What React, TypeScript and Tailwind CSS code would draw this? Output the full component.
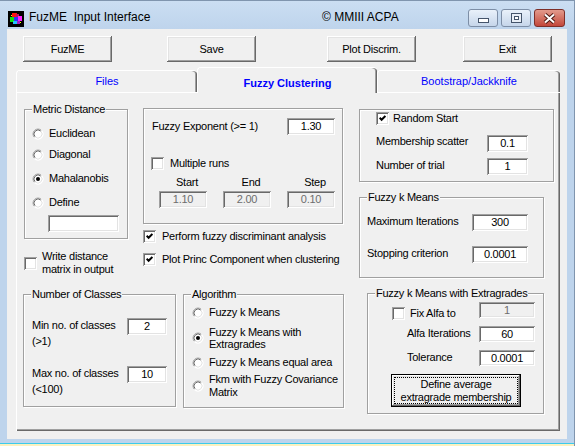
import React from "react"

const raised =
  "bg-[#f0f0f0] shadow-[inset_-1px_-1px_#696969,inset_1px_1px_#ffffff,inset_-2px_-2px_#a0a0a0,inset_2px_2px_#e3e3e3]"
const sunken =
  "shadow-[inset_1px_1px_#a0a0a0,inset_-1px_-1px_#ffffff,inset_2px_2px_#696969,inset_-2px_-2px_#e3e3e3]"

function Radio({ checked = false }: { checked?: boolean }) {
  return (
    <svg width="12" height="12" viewBox="0 0 12 12" className="shrink-0">
      <circle cx="6" cy="6" r="5.5" fill="#fff" />
      <path d="M2.46 9.54A5 5 0 0 1 9.54 2.46" fill="none" stroke="#a0a0a0" />
      <path d="M9.54 2.46A5 5 0 0 1 2.46 9.54" fill="none" stroke="#ffffff" />
      <path d="M3.17 8.83A4 4 0 0 1 8.83 3.17" fill="none" stroke="#696969" />
      <path d="M8.83 3.17A4 4 0 0 1 3.17 8.83" fill="none" stroke="#e3e3e3" />
      {checked && <circle cx="6" cy="6" r="2" fill="#000" />}
    </svg>
  )
}

function Check({ checked = false }: { checked?: boolean }) {
  return (
    <span className={`flex h-[13px] w-[13px] shrink-0 items-center justify-center bg-white ${sunken}`}>
      {checked && (
        <svg width="7" height="7" viewBox="0 0 7 7">
          <path d="M0.6 2.8 L2.6 4.8 L6.4 1" fill="none" stroke="#000" strokeWidth="2" />
        </svg>
      )}
    </span>
  )
}

function Field({ value = "", className = "", disabled = false }: { value?: string; className?: string; disabled?: boolean }) {
  return (
    <div
      className={`flex shrink-0 items-center justify-center ${
        disabled ? "bg-[#f0f0f0] text-[#6d6d6d]" : "bg-white text-black"
      } ${sunken} ${className}`}
    >
      {value}
    </div>
  )
}

function Group({ label, className = "", children }: { label?: string; className?: string; children?: React.ReactNode }) {
  return (
    <div className={`flex shrink-0 flex-col border border-[#a0a0a0] shadow-[inset_1px_1px_#ffffff,1px_1px_#ffffff] ${className}`}>
      {label && <div className="-mt-[7px] ml-[7px] w-fit bg-[#f0f0f0] px-[1px] leading-[13px]">{label}</div>}
      {children}
    </div>
  )
}

function AppIcon() {
  return (
    <svg width="16" height="16" viewBox="0 0 16 16" className="shrink-0">
      <rect width="16" height="16" fill="#000" />
      <rect x="4" y="2" width="5" height="4" fill="#ff1010" />
      <rect x="8" y="3" width="3" height="3" fill="#c01060" />
      <rect x="2" y="6" width="5" height="5" fill="#10e010" />
      <rect x="6" y="6" width="4" height="4" fill="#3030ff" />
      <rect x="10" y="5" width="4" height="5" fill="#ff20ff" />
      <rect x="5" y="10" width="4" height="3" fill="#20c0ff" />
      <rect x="9" y="10" width="3" height="3" fill="#a020c0" />
      <rect x="3" y="4" width="1" height="1" fill="#ffff00" />
      <rect x="12" y="11" width="1" height="1" fill="#ffff00" />
    </svg>
  )
}

export default function App() {
  return (
    <div className="flex h-[446px] w-[575px] flex-col overflow-hidden border-t border-r border-[#8095ae] bg-[#bed4ec] font-['Liberation_Sans',Arial,sans-serif] text-[11px] tracking-[-0.25px] text-black">
      {/* Title bar */}
      <div className="flex h-[28px] shrink-0 items-start bg-linear-to-b from-[#cbdef2] to-[#bed4ec]">
        <div className="ml-[8px] mt-[10px]">
          <AppIcon />
        </div>
        <span className="ml-[5px] mt-[9px] w-[293px] whitespace-pre text-[12px] leading-[15px] tracking-normal">
          FuzME  Input Interface
        </span>
        <span className="mt-[9px] text-[12px] leading-[15px] tracking-normal">© MMIII ACPA</span>
        <div className="ml-auto mr-[9px] mt-[8px] flex gap-[3px]">
          <div className="flex h-[18px] w-[30px] items-end justify-center rounded-[3px] border border-[#7d8ea6] bg-linear-to-b from-[#e9f1fa] to-[#c6d6ea] pb-[3px]">
            <svg width="11" height="5" viewBox="0 0 11 5">
              <rect x="0.5" y="0.5" width="10" height="4" fill="#fff" stroke="#44546a" />
            </svg>
          </div>
          <div className="flex h-[18px] w-[30px] items-center justify-center rounded-[3px] border border-[#7d8ea6] bg-linear-to-b from-[#e9f1fa] to-[#c6d6ea]">
            <svg width="11" height="10" viewBox="0 0 11 10">
              <rect x="0.5" y="0.5" width="10" height="9" fill="#e8eef6" stroke="#44546a" />
              <rect x="3.5" y="3.5" width="4" height="3" fill="#fff" stroke="#44546a" />
            </svg>
          </div>
          <div className="flex h-[18px] w-[31px] items-center justify-center rounded-[3px] border border-[#7e2f28] bg-linear-to-b from-[#e29a8c] to-[#c2463b]">
            <svg width="13" height="11" viewBox="0 0 13 11">
              <path d="M2 1.5 L11 9.5 M11 1.5 L2 9.5" stroke="#4d1a14" strokeWidth="4" />
              <path d="M2 1.5 L11 9.5 M11 1.5 L2 9.5" stroke="#ffffff" strokeWidth="2" />
            </svg>
          </div>
        </div>
      </div>

      {/* Client area */}
      <div className="mx-[7px] flex h-[410px] shrink-0 flex-col bg-[#f0f0f0]">
        {/* Command buttons */}
        <div className="mt-[7px] flex h-[26px]">
          <div className={`ml-[16px] flex h-[26px] w-[89px] items-center justify-center ${raised}`}>FuzME</div>
          <div className={`ml-[55px] flex h-[26px] w-[89px] items-center justify-center ${raised}`}>Save</div>
          <div className={`ml-[71px] flex h-[26px] w-[89px] items-center justify-center ${raised}`}>Plot Discrim.</div>
          <div className={`ml-[47px] flex h-[26px] w-[89px] items-center justify-center ${raised}`}>Exit</div>
        </div>

        {/* Tab control */}
        <div className="ml-[9px] mt-[5px] w-[544px]">
          <div className="flex h-[25px] items-end tracking-normal text-[#0000ff]">
            <div className="flex h-[22px] w-[181px] items-center justify-center rounded-t-[4px] border-t border-l border-white bg-[#f0f0f0] shadow-[inset_-1px_0_#696969,inset_-2px_0_#a0a0a0]">
              Files
            </div>
            <div className="relative z-10 -mb-[1px] flex h-[26px] w-[180px] items-center justify-center rounded-t-[4px] border-t border-l border-white bg-[#f0f0f0] pt-[5px] font-bold shadow-[inset_-1px_0_#696969,inset_-2px_0_#a0a0a0]">
              Fuzzy Clustering
            </div>
            <div className="flex h-[22px] w-[183px] items-center justify-center rounded-t-[4px] border-t border-l border-white bg-[#f0f0f0] shadow-[inset_-1px_0_#696969,inset_-2px_0_#a0a0a0]">
              Bootstrap/Jackknife
            </div>
          </div>

          {/* Tab page */}
          <div className="flex h-[339px] w-[544px] border-t border-l border-white pl-[6px] shadow-[inset_-1px_-1px_#696969,inset_-2px_-2px_#a0a0a0]">
            {/* Left and middle columns */}
            <div className="flex w-[321px] shrink-0 flex-col">
              <div className="flex h-[201px] items-start">
                <div className="ml-[1px] flex w-[104px] shrink-0 flex-col">
                  <Group label="Metric Distance" className="mt-[16px] h-[130px] w-[104px]">
                    <div className="mt-[11px] flex h-[13px] items-center pl-[7px]">
                      <Radio />
                      <span className="ml-[5px]">Euclidean</span>
                    </div>
                    <div className="mt-[8px] flex h-[13px] items-center pl-[7px]">
                      <Radio />
                      <span className="ml-[5px]">Diagonal</span>
                    </div>
                    <div className="mt-[11px] flex h-[13px] items-center pl-[7px]">
                      <Radio checked />
                      <span className="ml-[5px]">Mahalanobis</span>
                    </div>
                    <div className="mt-[11px] flex h-[13px] items-center pl-[7px]">
                      <Radio />
                      <span className="ml-[5px]">Define</span>
                    </div>
                    <Field className="ml-[23px] mt-[6px] h-[17px] w-[71px]" />
                  </Group>
                  <div className="mt-[11px] flex items-start">
                    <div className="mt-[7px]">
                      <Check />
                    </div>
                    <span className="ml-[5px] leading-[13px]">
                      Write distance
                      <br />
                      matrix in output
                    </span>
                  </div>
                </div>

                <div className="ml-[15px] flex w-[200px] shrink-0 flex-col">
                  <Group className="mt-[15px] h-[116px] w-[200px]">
                    <div className="mt-[9px] flex h-[17px] items-center justify-between pl-[8px] pr-[7px]">
                      <span>Fuzzy Exponent (&gt;= 1)</span>
                      <Field value="1.30" className="h-[17px] w-[48px]" />
                    </div>
                    <div className="mt-[22px] flex h-[13px] items-center pl-[7px]">
                      <Check />
                      <span className="ml-[6px]">Multiple runs</span>
                    </div>
                    <div className="mt-[6px] flex gap-[16px] pl-[19px] leading-[13px]">
                      <span className="w-[48px] text-center">Start</span>
                      <span className="w-[48px] text-center">End</span>
                      <span className="w-[48px] text-center">Step</span>
                    </div>
                    <div className="mt-[2px] flex gap-[16px] pl-[15px]">
                      <Field value="1.10" disabled className="h-[17px] w-[48px]" />
                      <Field value="2.00" disabled className="h-[17px] w-[48px]" />
                      <Field value="0.10" disabled className="h-[17px] w-[48px]" />
                    </div>
                  </Group>
                  <div className="mt-[6px] flex h-[13px] items-center">
                    <Check checked />
                    <span className="ml-[6px] whitespace-nowrap">Perform fuzzy discriminant analysis</span>
                  </div>
                  <div className="mt-[10px] flex h-[13px] items-center">
                    <Check checked />
                    <span className="ml-[6px] whitespace-nowrap">Plot Princ Component when clustering</span>
                  </div>
                </div>
              </div>

              <div className="flex items-start">
                <Group label="Number of Classes" className="h-[113px] w-[153px]">
                  <div className="mt-[16px] flex items-start pl-[8px] pr-[8px]">
                    <span className="leading-[16px]">
                      Min no. of classes
                      <br />
                      (&gt;1)
                    </span>
                    <Field value="2" className="ml-auto mt-[1px] h-[17px] w-[40px]" />
                  </div>
                  <div className="mt-[16px] flex items-start pl-[8px] pr-[8px]">
                    <span className="leading-[16px]">
                      Max no. of classes
                      <br />
                      (&lt;100)
                    </span>
                    <Field value="10" className="ml-auto mt-[1px] h-[17px] w-[40px]" />
                  </div>
                </Group>

                <Group label="Algorithm" className="ml-[7px] h-[114px] w-[161px]">
                  <div className="mt-[5px] flex h-[13px] items-center pl-[8px]">
                    <Radio />
                    <span className="ml-[5px]">Fuzzy k Means</span>
                  </div>
                  <div className="mt-[7px] flex items-center pl-[8px]">
                    <Radio checked />
                    <span className="ml-[5px] leading-[12px]">
                      Fuzzy k Means with
                      <br />
                      Extragrades
                    </span>
                  </div>
                  <div className="mt-[6px] flex h-[13px] items-center pl-[8px]">
                    <Radio />
                    <span className="ml-[5px] whitespace-nowrap">Fuzzy k Means equal area</span>
                  </div>
                  <div className="mt-[4px] flex items-center pl-[8px]">
                    <Radio />
                    <span className="ml-[5px] whitespace-nowrap leading-[13px]">
                      Fkm with Fuzzy Covariance
                      <br />
                      Matrix
                    </span>
                  </div>
                </Group>
              </div>
            </div>

            {/* Right column */}
            <div className="ml-[15px] flex flex-col">
              <Group className="mt-[16px] h-[73px] w-[195px]">
                <div className="mt-[2px] flex h-[13px] items-center pl-[16px]">
                  <Check checked />
                  <span className="ml-[4px]">Random Start</span>
                </div>
                <div className="mt-[10px] flex h-[17px] items-center pl-[16px]">
                  <span className="mb-[4px] w-[111px]">Membership scatter</span>
                  <Field value="0.1" className="h-[17px] w-[41px]" />
                </div>
                <div className="mt-[6px] flex h-[17px] items-center pl-[16px]">
                  <span className="mb-[2px] w-[111px]">Number of trial</span>
                  <Field value="1" className="h-[17px] w-[41px]" />
                </div>
              </Group>

              <Group label="Fuzzy k Means" className="mt-[15px] h-[81px] w-[185px]">
                <div className="mt-[10px] flex h-[17px] items-center pl-[7px]">
                  <span className="mb-[2px] w-[105px]">Maximum Iterations</span>
                  <Field value="300" className="h-[17px] w-[56px]" />
                </div>
                <div className="mt-[15px] flex h-[17px] items-center pl-[7px]">
                  <span className="mb-[2px] w-[105px]">Stopping criterion</span>
                  <Field value="0.0001" className="h-[17px] w-[56px]" />
                </div>
              </Group>

              <Group label="Fuzzy k Means with Extragrades" className="ml-[8px] mt-[15px] h-[121px] w-[177px]">
                <div className="mt-[2px] flex h-[16px] items-start pr-[8px]">
                  <div className="mt-[5px] flex h-[13px] items-center pl-[24px]">
                    <Check />
                    <span className="ml-[5px]">Fix Alfa to</span>
                  </div>
                  <Field value="1" disabled className="ml-auto h-[16px] w-[56px]" />
                </div>
                <div className="mt-[8px] flex h-[16px] items-center pl-[39px]">
                  <span className="mb-[2px] w-[72px]">Alfa Iterations</span>
                  <Field value="60" className="h-[16px] w-[56px]" />
                </div>
                <div className="mt-[8px] flex h-[16px] items-center pl-[39px]">
                  <span className="mb-[2px] w-[72px]">Tolerance</span>
                  <Field value="0.0001" className="h-[16px] w-[56px]" />
                </div>
                <div className={`ml-[23px] mt-[8px] flex h-[33px] w-[130px] border border-black p-[2px] ${raised}`}>
                  <div className="flex flex-1 items-center justify-center border border-dotted border-black text-center leading-[13px]">
                    Define average
                    <br />
                    extragrade membership
                  </div>
                </div>
              </Group>
            </div>
          </div>
        </div>
      </div>

      {/* Bottom frame edge */}
      <div className="mt-auto h-[1px] shrink-0 bg-[#3ccbec]" />
      <div className="h-[2px] shrink-0 bg-[#fbf1bf]" />
    </div>
  )
}
